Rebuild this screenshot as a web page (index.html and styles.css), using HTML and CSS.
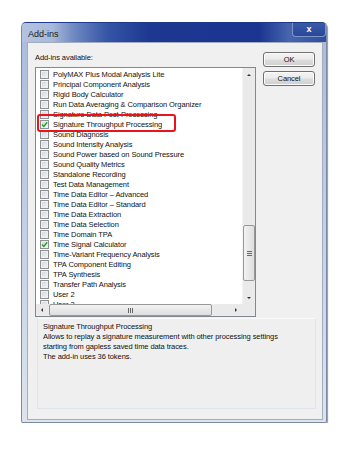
FILE: index.html
```html
<!DOCTYPE html>
<html lang="en">
<head>
    <meta charset="UTF-8">
    <title>Add-ins</title>
    <link rel="stylesheet" href="styles.css">
</head>
<body>
    <div class="window">
        <div class="titlebar">
            <span class="title">Add-ins</span>
            <div class="close">x</div>
        </div>
        <div class="frame">
            <div class="client">
                <div class="top">
                    <div class="left">
                        <div class="label">Add-ins available:</div>
                        <div class="listbox">
                            <div class="items">
                                <div class="row"><span class="cb"></span>PolyMAX Plus Modal Analysis Lite</div>
                                <div class="row"><span class="cb"></span>Principal Component Analysis</div>
                                <div class="row"><span class="cb"></span>Rigid Body Calculator</div>
                                <div class="row"><span class="cb"></span>Run Data Averaging &amp; Comparison Organizer</div>
                                <div class="row"><span class="cb"></span>Signature Data Post-Processing</div>
                                <div class="row"><span class="cb checked"><svg viewBox="0 0 7 7" width="7" height="7"><path d="M1 3.6 L2.8 5.4 L6.2 1.2" fill="none" stroke="#24a124" stroke-width="1.4"/></svg></span>Signature Throughput Processing</div>
                                <div class="row"><span class="cb"></span>Sound Diagnosis</div>
                                <div class="row"><span class="cb"></span>Sound Intensity Analysis</div>
                                <div class="row"><span class="cb"></span>Sound Power based on Sound Pressure</div>
                                <div class="row"><span class="cb"></span>Sound Quality Metrics</div>
                                <div class="row"><span class="cb"></span>Standalone Recording</div>
                                <div class="row"><span class="cb"></span>Test Data Management</div>
                                <div class="row"><span class="cb"></span>Time Data Editor &ndash; Advanced</div>
                                <div class="row"><span class="cb"></span>Time Data Editor &ndash; Standard</div>
                                <div class="row"><span class="cb"></span>Time Data Extraction</div>
                                <div class="row"><span class="cb"></span>Time Data Selection</div>
                                <div class="row"><span class="cb"></span>Time Domain TPA</div>
                                <div class="row"><span class="cb checked"><svg viewBox="0 0 7 7" width="7" height="7"><path d="M1 3.6 L2.8 5.4 L6.2 1.2" fill="none" stroke="#24a124" stroke-width="1.4"/></svg></span>Time Signal Calculator</div>
                                <div class="row"><span class="cb"></span>Time-Variant Frequency Analysis</div>
                                <div class="row"><span class="cb"></span>TPA Component Editing</div>
                                <div class="row"><span class="cb"></span>TPA Synthesis</div>
                                <div class="row"><span class="cb"></span>Transfer Path Analysis</div>
                                <div class="row"><span class="cb"></span>User 2</div>
                                <div class="row"><span class="cb"></span>User 3</div>
                                <div class="highlight"></div>
                            </div>
                            <div class="vscroll">
                                <div class="arrow"><span class="tri up"></span></div>
                                <div class="track">
                                    <div class="vthumb"><span class="grip-h"></span></div>
                                </div>
                                <div class="arrow"><span class="tri down"></span></div>
                            </div>
                            <div class="hscroll">
                                <div class="arrow"><span class="tri lt"></span></div>
                                <div class="track">
                                    <div class="hthumb"><span class="grip-v"></span></div>
                                </div>
                                <div class="arrow"><span class="tri rt"></span></div>
                            </div>
                            <div class="corner"></div>
                        </div>
                    </div>
                    <div class="buttons">
                        <div class="btn">OK</div>
                        <div class="btn">Cancel</div>
                    </div>
                </div>
                <div class="desc">
                    <div class="desc-title">Signature Throughput Processing</div>
                    <div>Allows to replay a signature measurement with other processing settings</div>
                    <div>starting from gapless saved time data traces.</div>
                    <div>The add-in uses 36 tokens.</div>
                </div>
            </div>
        </div>
    </div>
</body>
</html>
```

FILE: styles.css
```css
* {
    margin: 0;
    padding: 0;
    box-sizing: border-box;
}

body {
    background: #fff;
    font-family: "Liberation Sans", Arial, sans-serif;
    font-size: 7.5px;
    letter-spacing: -0.08px;
    color: #111;
}

.window {
    margin: 22px 0 0 21px;
    width: 306px;
    height: 401px;
    background: linear-gradient(#a9bbdc, #dde4ee);
    border: 1px solid #7d8aa3;
    border-top-color: #1f3a8a;
    border-radius: 5px 5px 2px 2px;
    display: flex;
    flex-direction: column;
    box-shadow: 1px 1px 1px #9a9a9a;
}

.titlebar {
    height: 19px;
    display: flex;
    align-items: flex-start;
    justify-content: space-between;
    background: linear-gradient(to right, #b4c3df 0%, #a8b9da 10%, #6f89c2 17%, #3555a6 28%, #1c3891 42%, #1a3590 78%, #4766ae 88%, #2e4d9c 100%);
    border-radius: 4px 4px 0 0;
}

.title {
    font-size: 9px;
    letter-spacing: 0;
    color: #1a1a1a;
    padding: 6px 0 0 6px;
}

.close {
    width: 34px;
    height: 14px;
    margin-right: 0;
    border: 1px solid #7f97c6;
    border-top: none;
    border-radius: 0 0 4px 4px;
    background: linear-gradient(#3a5aa6, #28479a);
    color: #fff;
    font-weight: bold;
    font-size: 9px;
    text-align: center;
    line-height: 12px;
}

.frame {
    flex: 1;
    padding: 0 3px 2px 5px;
    display: flex;
}

.client {
    flex: 1;
    background: #f0f0f0;
    border: 1px solid #a3adbd;
    display: flex;
    flex-direction: column;
    padding-left: 7px;
}

.top {
    display: flex;
    height: 274px;
}

.left {
    width: 221px;
}

.label {
    margin-top: 10px;
    line-height: 10px;
    height: 14px;
}

.listbox {
    height: 250px;
    border: 1px solid #828790;
    background: #fff;
    display: grid;
    grid-template-columns: 1fr 13px;
    grid-template-rows: 1fr 12px;
}

.items {
    position: relative;
    overflow: hidden;
    padding-top: 1px;
}

.row {
    height: 10px;
    display: flex;
    align-items: center;
    gap: 4px;
    padding-left: 4px;
    white-space: nowrap;
}

.cb {
    width: 9px;
    height: 9px;
    flex: none;
    border: 1px solid #8e8f8f;
    background: linear-gradient(135deg, #cfd4dc, #f4f6f9);
    box-shadow: inset 0 0 0 1px #eef0f3;
    display: flex;
    align-items: center;
    justify-content: center;
}

.highlight {
    position: absolute;
    left: 1px;
    top: 46px;
    width: 139px;
    height: 18px;
    border: 2.5px solid #e8141c;
    border-radius: 3px;
}

.vscroll,
.hscroll {
    background: #eaeaea;
    display: flex;
}

.vscroll {
    flex-direction: column;
    border-left: 1px solid #f4f4f4;
}

.arrow {
    width: 12px;
    height: 12px;
    flex: none;
    display: flex;
    align-items: center;
    justify-content: center;
}

.vscroll .arrow {
    height: 13px;
}

.track {
    flex: 1;
}

.vthumb {
    margin: 144px 0 0 0;
    height: 56px;
    border: 1px solid #989898;
    border-radius: 2px;
    background: linear-gradient(to right, #f2f2f2, #dedede);
    display: flex;
    align-items: center;
    justify-content: center;
}

.hthumb {
    margin: 0 0 0 1px;
    width: 163px;
    height: 12px;
    border: 1px solid #989898;
    border-radius: 2px;
    background: linear-gradient(#f2f2f2, #dedede);
    display: flex;
    align-items: center;
    justify-content: center;
}

.grip-h {
    width: 5px;
    height: 5px;
    border-top: 1px solid #666;
    border-bottom: 1px solid #666;
    background: linear-gradient(transparent 1px, #666 1px, #666 2px, transparent 2px);
}

.grip-v {
    width: 5px;
    height: 5px;
    border-left: 1px solid #666;
    border-right: 1px solid #666;
    background: linear-gradient(to right, transparent 1px, #666 1px, #666 2px, transparent 2px);
}

.tri {
    width: 0;
    height: 0;
    border: 2.5px solid transparent;
}

.tri.up {
    border-bottom-color: #333;
    border-top-width: 0;
}

.tri.down {
    border-top-color: #333;
    border-bottom-width: 0;
}

.tri.lt {
    border-right-color: #333;
    border-left-width: 0;
}

.tri.rt {
    border-left-color: #333;
    border-right-width: 0;
}

.corner {
    background: #eaeaea;
}

.buttons {
    margin-left: 7px;
    padding-top: 9px;
    display: flex;
    flex-direction: column;
    gap: 4px;
}

.btn {
    width: 52px;
    height: 15px;
    border: 1px solid #707070;
    border-radius: 3px;
    background: linear-gradient(#f3f3f3 0%, #ebebeb 48%, #dddddd 52%, #cfcfcf 100%);
    box-shadow: inset 0 0 0 1px #fbfbfb;
    text-align: center;
    line-height: 13px;
}

.desc {
    margin: 1px 6px 10px 2px;
    flex: 1;
    border: 1px solid #dfe3ea;
    border-top: 1px solid #fafafa;
    background: #efefef;
    padding: 3px 0 0 5px;
    line-height: 10px;
}

.desc-title {
    padding-left: 0;
}
```
